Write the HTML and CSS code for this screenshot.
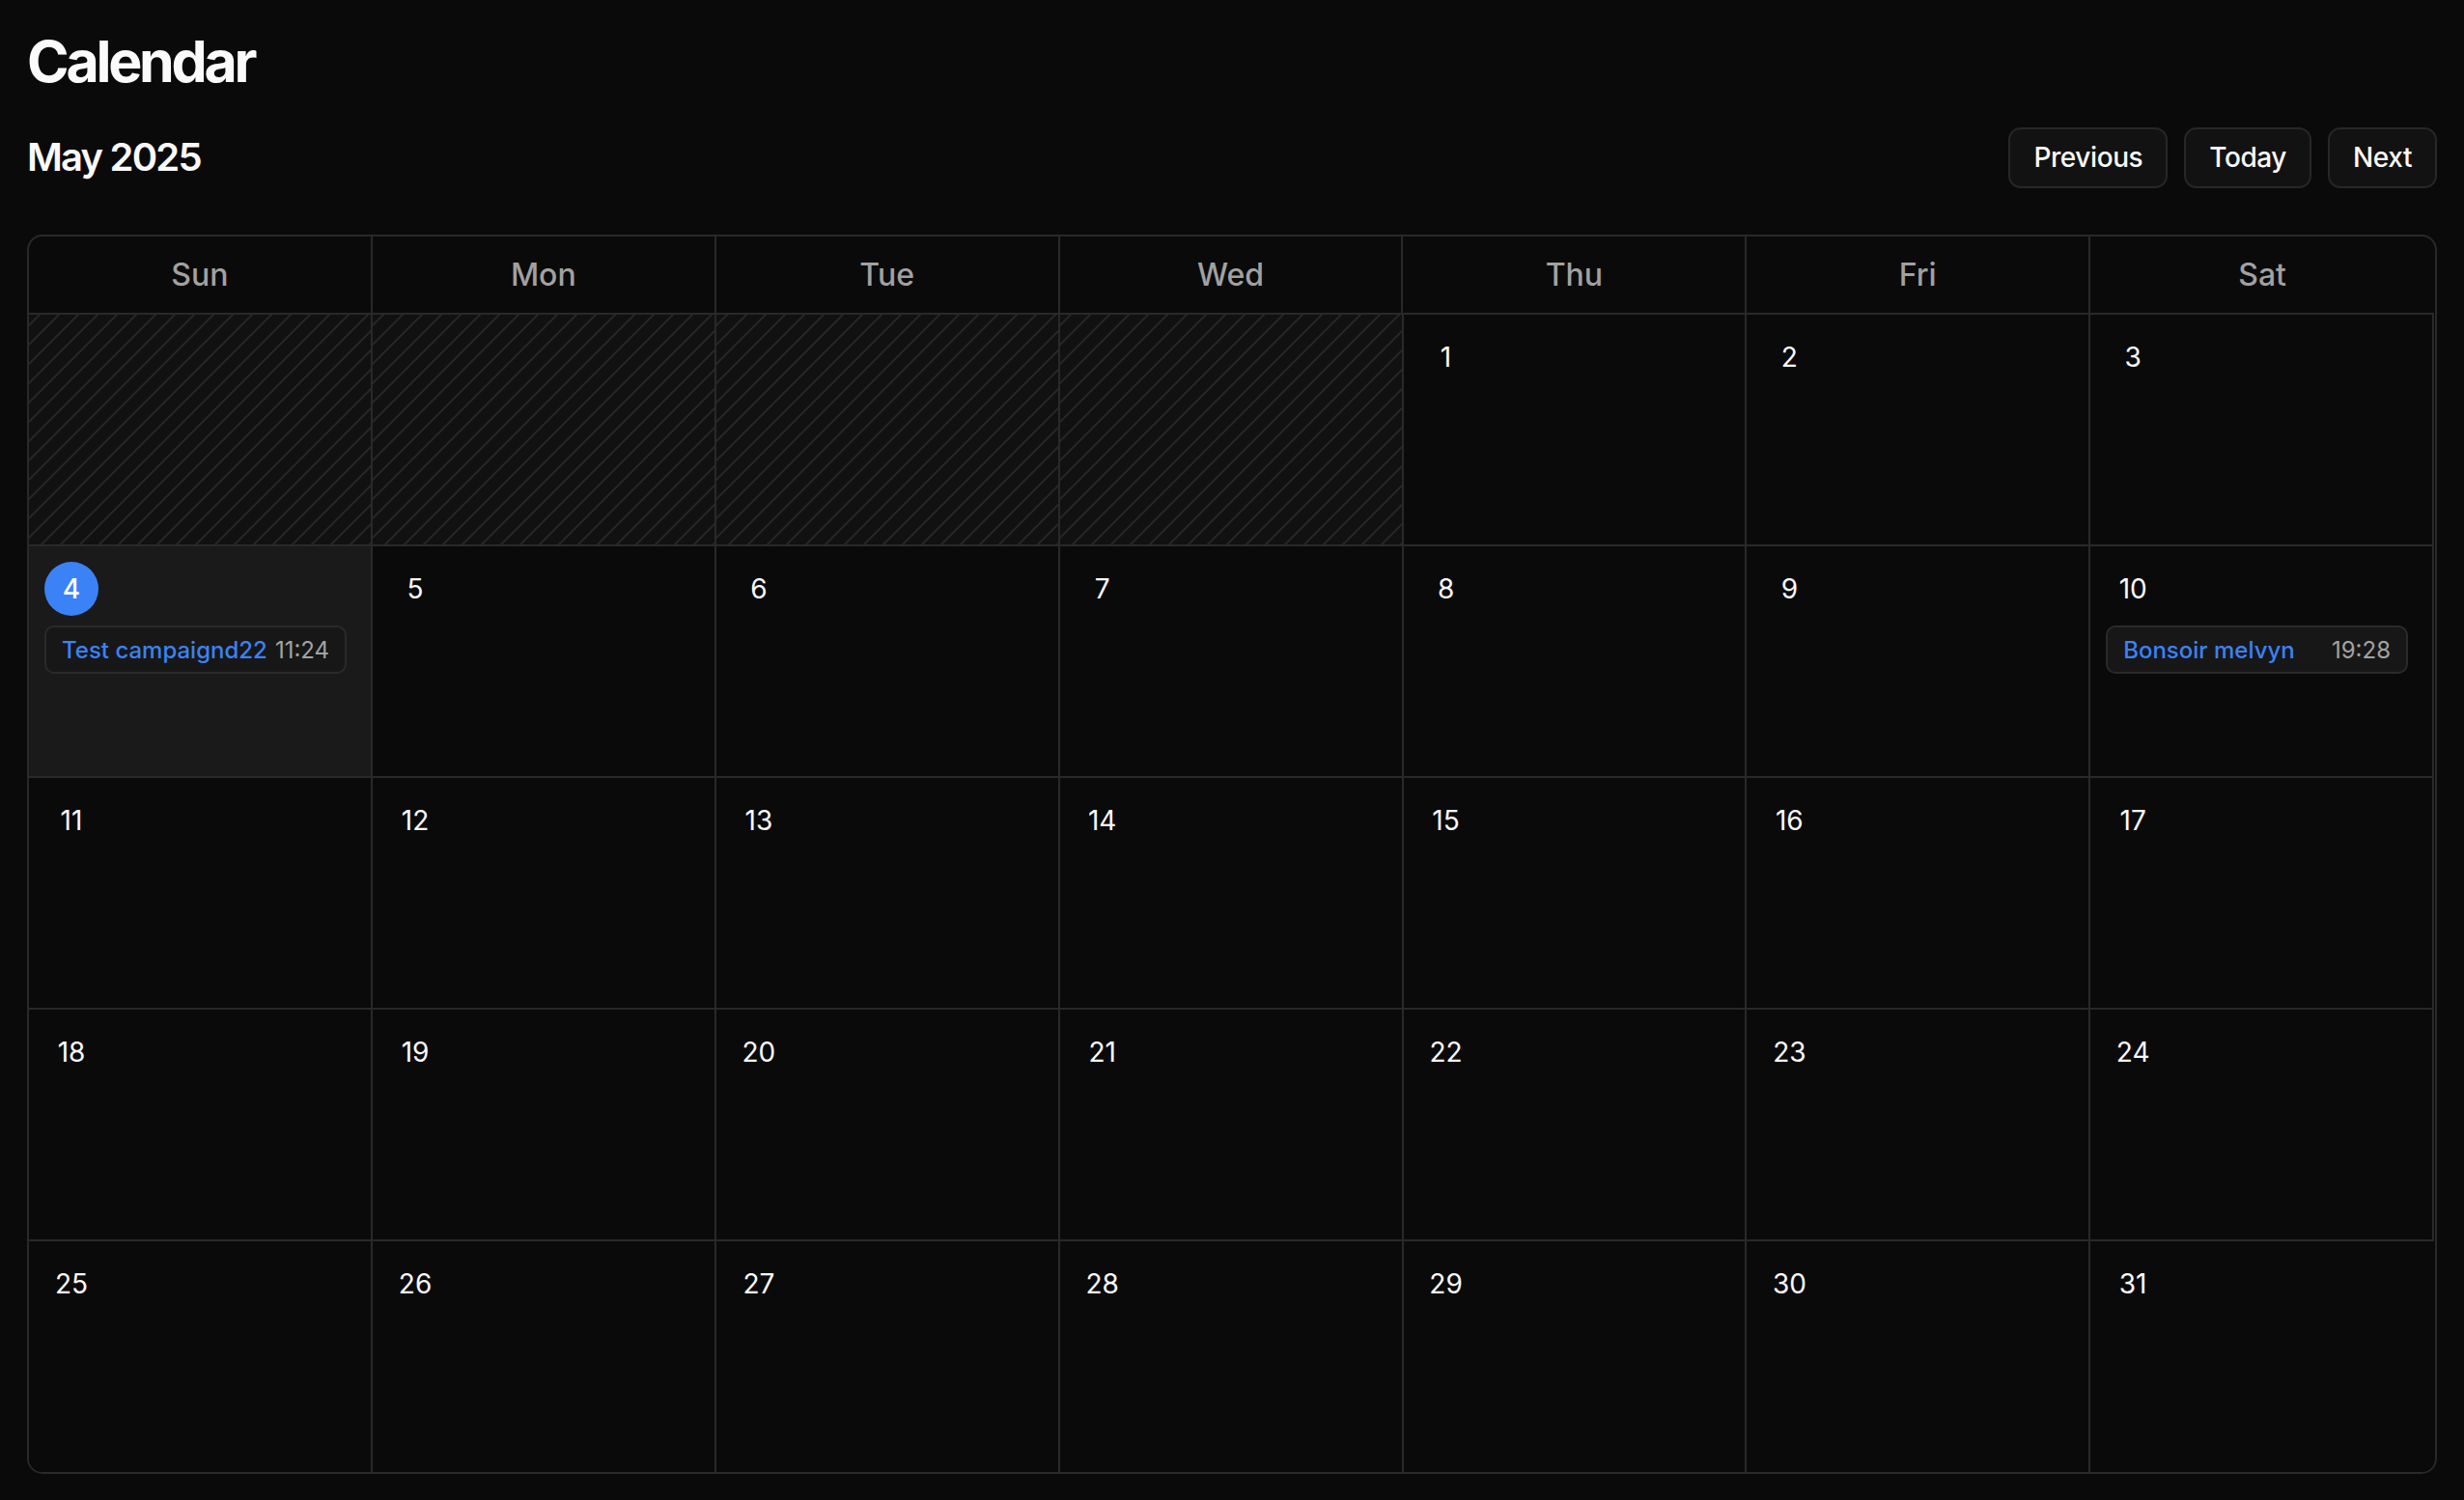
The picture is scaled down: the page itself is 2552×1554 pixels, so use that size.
FILE: index.html
```html
<!DOCTYPE html>
<html lang="en">
<head>
<meta charset="utf-8">
<title>Calendar</title>
<link rel="stylesheet" href="styles.css">
</head>
<body>
<main class="page">
  <h1 class="title">Calendar</h1>
  <div class="toolbar">
    <h2 class="month">May 2025</h2>
    <div class="nav">
      <button class="btn">Previous</button>
      <button class="btn">Today</button>
      <button class="btn">Next</button>
    </div>
  </div>
  <div class="calendar">
    <div class="weekdays">
      <div class="wd">Sun</div><div class="wd">Mon</div><div class="wd">Tue</div><div class="wd">Wed</div><div class="wd">Thu</div><div class="wd">Fri</div><div class="wd">Sat</div>
    </div>
    <div class="days">
      <div class="cell empty"></div>
      <div class="cell empty"></div>
      <div class="cell empty"></div>
      <div class="cell empty"></div>
      <div class="cell"><span class="num">1</span></div>
      <div class="cell"><span class="num">2</span></div>
      <div class="cell"><span class="num">3</span></div>

      <div class="cell is-today"><span class="num today">4</span>
        <div class="event"><span class="ev-title">Test campaignd22</span><span class="ev-time">11:24</span></div>
      </div>
      <div class="cell"><span class="num">5</span></div>
      <div class="cell"><span class="num">6</span></div>
      <div class="cell"><span class="num">7</span></div>
      <div class="cell"><span class="num">8</span></div>
      <div class="cell"><span class="num">9</span></div>
      <div class="cell"><span class="num">10</span>
        <div class="event"><span class="ev-title">Bonsoir melvyn</span><span class="ev-time">19:28</span></div>
      </div>

      <div class="cell"><span class="num">11</span></div>
      <div class="cell"><span class="num">12</span></div>
      <div class="cell"><span class="num">13</span></div>
      <div class="cell"><span class="num">14</span></div>
      <div class="cell"><span class="num">15</span></div>
      <div class="cell"><span class="num">16</span></div>
      <div class="cell"><span class="num">17</span></div>

      <div class="cell"><span class="num">18</span></div>
      <div class="cell"><span class="num">19</span></div>
      <div class="cell"><span class="num">20</span></div>
      <div class="cell"><span class="num">21</span></div>
      <div class="cell"><span class="num">22</span></div>
      <div class="cell"><span class="num">23</span></div>
      <div class="cell"><span class="num">24</span></div>

      <div class="cell"><span class="num">25</span></div>
      <div class="cell"><span class="num">26</span></div>
      <div class="cell"><span class="num">27</span></div>
      <div class="cell"><span class="num">28</span></div>
      <div class="cell"><span class="num">29</span></div>
      <div class="cell"><span class="num">30</span></div>
      <div class="cell"><span class="num">31</span></div>
    </div>
  </div>
</main>
</body>
</html>
```

FILE: styles.css
```css
* {
  box-sizing: border-box;
}

html, body {
  margin: 0;
  padding: 0;
  background: #0a0a0a;
}

body {
  font-family: Inter, "Liberation Sans", sans-serif;
  color: #fafafa;
}

.page {
  padding: 28px 28px 0 28px;
}

.title {
  margin: 0 0 31px 0;
  font-size: 59px;
  line-height: 72px;
  font-weight: 700;
  letter-spacing: -0.055em;
  color: #fafafa;
}

.toolbar {
  display: flex;
  align-items: center;
  justify-content: space-between;
  height: 64px;
  margin-bottom: 48px;
}

.month {
  margin: 0;
  font-size: 40px;
  line-height: 56px;
  font-weight: 600;
  letter-spacing: -0.045em;
  color: #fafafa;
}

.nav {
  display: flex;
  gap: 17px;
}

.btn {
  height: 63px;
  padding: 0 24px;
  border: 2px solid #272727;
  border-radius: 13px;
  background: #121212;
  color: #fafafa;
  font-family: inherit;
  font-size: 28px;
  font-weight: 500;
  letter-spacing: -0.015em;
}

.calendar {
  border: 2px solid #292929;
  border-radius: 16px;
  overflow: hidden;
}

.weekdays,
.days {
  display: grid;
  grid-template-columns: repeat(7, 1fr);
  margin-right: 1px;
}

.wd {
  height: 81px;
  display: flex;
  align-items: center;
  justify-content: center;
  border-right: 2px solid #292929;
  border-bottom: 2px solid #292929;
  font-size: 32px;
  font-weight: 500;
  color: #a1a1a1;
}

.wd:last-child {
  border-right: none;
}

.cell {
  height: 240px;
  padding: 16px;
  border-right: 2px solid #292929;
  border-bottom: 2px solid #292929;
  display: flex;
  flex-direction: column;
  align-items: flex-start;
  gap: 10px;
  background: #0a0a0a;
}

.cell:nth-child(n+29) {
  border-bottom: none;
  height: 239px;
}

.cell:last-child {
  border-right: none;
}

.cell.empty {
  background-color: #111111;
  background-image: repeating-linear-gradient(
    -45deg,
    #252525 0,
    #252525 1.6px,
    transparent 1.6px,
    transparent 14.14px
  );
}

.cell.is-today {
  background: #1a1a1a;
}

.num {
  width: 56px;
  height: 56px;
  display: flex;
  align-items: center;
  justify-content: center;
  font-size: 28px;
  font-weight: 400;
  color: #fafafa;
  flex-shrink: 0;
}

.num.today {
  background: #3b82f6;
  border-radius: 50%;
  font-weight: 500;
}

.event {
  align-self: stretch;
  margin-right: 9px;
  height: 50px;
  padding: 0 16px;
  border: 2px solid #2a2a2a;
  border-radius: 10px;
  background: #171717;
  display: flex;
  align-items: center;
  justify-content: space-between;
  gap: 8px;
  font-size: 24px;
  font-weight: 500;
  white-space: nowrap;
  overflow: hidden;
}

.ev-title {
  color: #3b82f6;
  overflow: hidden;
  text-overflow: ellipsis;
}

.ev-time {
  color: #a3a3a3;
  font-weight: 400;
  flex-shrink: 0;
}
```
